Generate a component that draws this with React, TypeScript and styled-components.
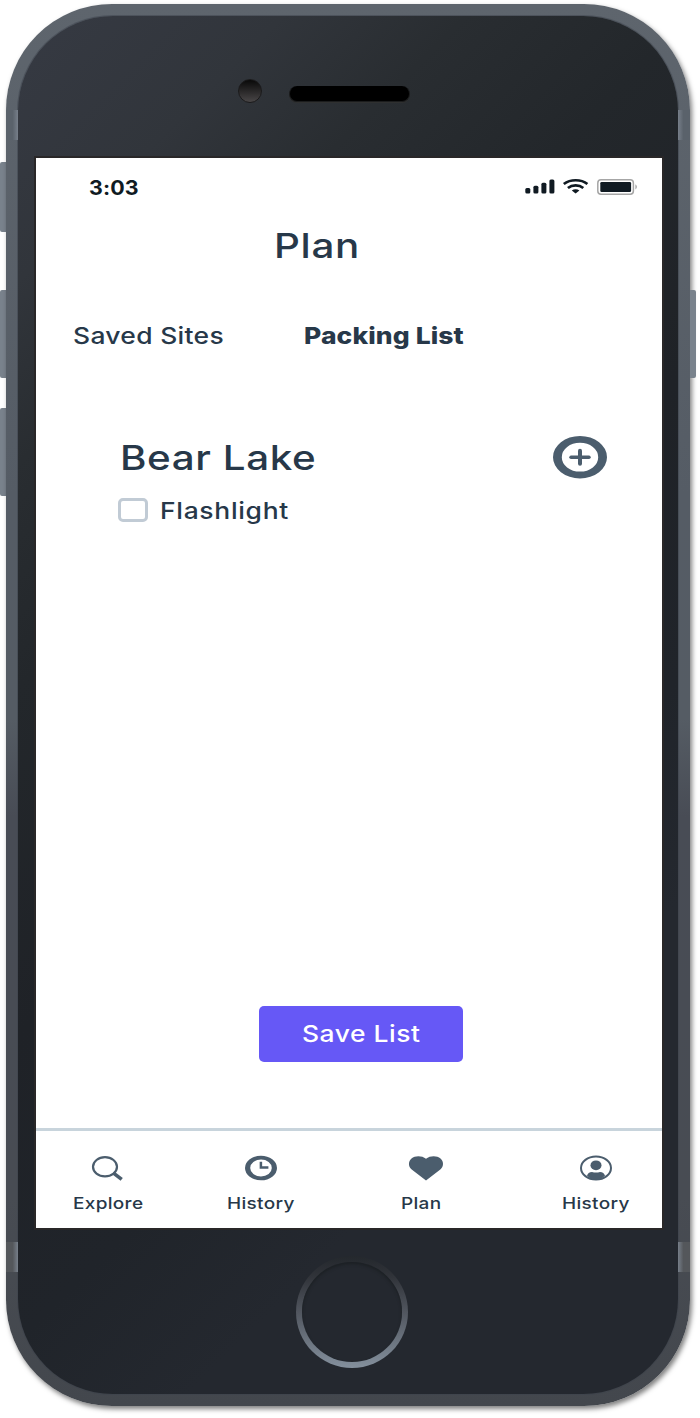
import React from "react";
import styled, { createGlobalStyle } from "styled-components";

const ink = "#273849";
const slate = "#4b5d6d";

const GlobalStyle = createGlobalStyle`
  * { box-sizing: border-box; }
  body { margin: 0; background: #fff; overflow: hidden; font-family: Inter, "Liberation Sans", sans-serif; }
  svg { display: block; overflow: visible; }
`;

const Stage = styled.main`
  display: flex;
  width: 700px;
  height: 1418px;
  padding-top: 4px;
`;

const Rail = styled.div<{ $side: "left" | "right" }>`
  display: flex;
  flex-direction: column;
  width: 6px;
  padding-top: ${(p) => (p.$side === "left" ? 158 : 286)}px;
`;

const SideButton = styled.div<{ $h: number; $gap?: number; $side: "left" | "right" }>`
  position: relative;
  height: ${(p) => p.$h}px;
  margin-bottom: ${(p) => p.$gap ?? 0}px;
  background: #79828c;
  border-radius: ${(p) => (p.$side === "left" ? "2px 0 0 2px" : "0 2px 2px 0")};
`;

const Frame = styled.div`
  position: relative;
  width: 684px;
  height: 1402px;
  padding: 12px;
  border-radius: 106px;
  background: linear-gradient(180deg, #5e656d 0%, #555c65 35%, #555c64 51%, #484c55 58%, #484c53 85%, #43474d 100%);
  box-shadow: 2px 3px 5px rgba(0, 0, 0, 0.5);
`;

const Antenna = styled.div<{ $side: "left" | "right"; $top: number; $bright?: boolean }>`
  position: absolute;
  top: ${(p) => p.$top}px;
  ${(p) => p.$side}: 0;
  width: 12px;
  height: 30px;
  background: linear-gradient(
    ${(p) => (p.$side === "left" ? "90deg" : "270deg")},
    ${(p) => (p.$bright ? "#54575b" : "#5a626b")} 55%,
    #777f8a 100%
  );
`;

const Bezel = styled.div`
  display: grid;
  grid-template-rows: 140px 1074px 164px;
  justify-content: center;
  width: 660px;
  height: 1378px;
  padding-left: 2px;
  border-radius: 95px;
  background: linear-gradient(135deg, #363a43 0%, #31353b 13%, #292d31 22%, #23272b 33%, #1f2227 50%, #20242a 65%, #24282f 76%, #24282f 100%);
  box-shadow: 0 0 0 1px rgba(60, 66, 75, 0.5);
`;

const Sensors = styled.div`
  display: flex;
  align-items: center;
  gap: 27px;
  padding: 14px 0 0 204px;
`;

const Camera = styled.div`
  width: 24px;
  height: 24px;
  margin-top: -4px;
  border: 1px solid #1b1a1b;
  border-radius: 50%;
  background: linear-gradient(#090909, #494647);
`;

const Speaker = styled.div`
  width: 121px;
  height: 16px;
  margin-top: 1px;
  border: 1px solid #1b1c1d;
  border-top: 0;
  border-radius: 8px;
  background: #000;
  box-shadow: 0 1px 0 0 #2f3030;
`;

const Screen = styled.section`
  display: flex;
  flex-direction: column;
  width: 630px;
  height: 1074px;
  border: 2px solid #292728;
  background: #fff;
`;

const Label = styled.span<{
  $size: number;
  $weight?: number;
  $stretch?: number;
  $spacing?: number;
  $color?: string;
}>`
  display: block;
  white-space: nowrap;
  font-size: ${(p) => p.$size}px;
  line-height: 40px;
  font-weight: ${(p) => p.$weight ?? 550};
  letter-spacing: ${(p) => p.$spacing ?? 0}px;
  color: ${(p) => p.$color ?? ink};
  transform: scaleX(${(p) => p.$stretch ?? 1});
  transform-origin: 0 50%;
`;

const StatusBar = styled.header`
  display: flex;
  justify-content: space-between;
  height: 58px;
  padding: 10px 24px 0 53px;
`;

const StatusIcons = styled.div`
  display: flex;
  align-items: flex-start;
  gap: 8px;
  padding-top: 11px;
`;

const Title = styled.div`
  height: 80px;
  padding: 10px 0 0 238px;
`;

const Tabs = styled.nav`
  display: grid;
  grid-template-columns: 231px 1fr;
  height: 120px;
  padding: 20px 0 0 37px;
`;

const ListHeader = styled.div`
  display: flex;
  justify-content: space-between;
  align-items: center;
  height: 84px;
  padding: 0 55px 0 84px;

  svg { margin-bottom: 1px; }
`;

const Item = styled.label`
  display: flex;
  align-items: center;
  gap: 12px;
  height: 40px;
  margin-top: -9px;
  padding-left: 82px;
`;

const Checkbox = styled.span`
  width: 30px;
  height: 24px;
  margin-top: -2px;
  border: 3px solid #c1cbd5;
  border-radius: 5px;
`;

const SaveButton = styled.button`
  display: block;
  width: 204px;
  height: 56px;
  margin: auto 0 66px 223px;
  padding: 0 0 0 43px;
  border: 0;
  border-radius: 5px;
  background: #6658f6;
  font-family: inherit;
  text-align: left;
`;

const TabBar = styled.footer`
  display: grid;
  grid-template-columns: 154px 174px 161px 1fr;
  height: 100px;
  padding: 24px 0 0 37px;
  border-top: 3px solid #c8d4dc;
`;

const NavItem = styled.div<{ $inset: number }>`
  display: flex;
  flex-direction: column;
  gap: 2px;
  svg { margin-left: ${(p) => p.$inset}px; }
`;

const HomeArea = styled.div`
  display: flex;
  justify-content: center;
  padding: 26px 0 0 6px;
`;

const HomeButton = styled.div`
  width: 112px;
  height: 112px;
  padding: 6px;
  border-radius: 50%;
  background: linear-gradient(#24282d 0%, #303339 18%, #51565f 50%, #84909d 100%);
`;

const HomeFace = styled.div`
  height: 100px;
  border-radius: 50%;
  background: #24282f;
  box-shadow: inset 0 2px 3px #1c2024;
`;

const Signal = () => (
  <svg width="30" height="15" viewBox="0 0 30 15" fill="#101a22">
    <rect x="0.3" y="8.9" width="5" height="5.6" rx="1.5" />
    <rect x="8.4" y="6.7" width="5" height="7.8" rx="1.5" />
    <rect x="16.4" y="3.7" width="5" height="10.8" rx="1.5" />
    <rect x="24.4" y="0.5" width="5" height="14" rx="1.5" />
  </svg>
);

const Wifi = () => (
  <svg width="26" height="15" viewBox="0 0 26 15" fill="none" stroke="#101a22" strokeWidth="2.7">
    <path d="M.8 5C7.4 0 18 0 24.4 5" />
    <path d="M4.9 9C9.2 5.6 16.1 5.6 20.3 9" />
    <path d="M8.8 11.6C11 9.9 14.2 9.9 16.4 11.6L12.6 14.4Z" fill="#101a22" stroke="none" />
  </svg>
);

const Battery = () => (
  <svg width="41" height="16" viewBox="0 0 41 16">
    <rect x="0.8" y="0.8" width="35.6" height="14.4" rx="3.2" fill="none" stroke="#a6a6a6" strokeWidth="1.5" />
    <rect x="3.3" y="2.9" width="30.8" height="10.2" rx="1.3" fill="#101a22" />
    <path d="M38.4 5.2Q41.5 7.8 38.4 10.4Z" fill="#a6a6a6" />
  </svg>
);

const AddIcon = () => (
  <svg width="54" height="43" viewBox="0 0 54 43" fill="none" stroke={slate} strokeWidth="4" strokeLinecap="round">
    <path
      d="M27 0A27 21.2 0 1 1 27 42.4A27 21.2 0 1 1 27 0ZM27 6.8A18.2 14.4 0 1 0 27 35.6A18.2 14.4 0 1 0 27 6.8Z"
      fill={slate}
      fillRule="evenodd"
      stroke="none"
    />
    <path d="M27 14.7V27.7" />
    <path d="M18 21.2H36" strokeWidth="3.4" />
  </svg>
);

const SearchIcon = () => (
  <svg width="32" height="26" viewBox="0 0 32 26" fill="none" stroke={slate}>
    <ellipse cx="14" cy="11.8" rx="12" ry="9.6" strokeWidth="2.2" />
    <path d="M22.2 17.8L30.7 24.4" strokeWidth="3.6" />
  </svg>
);

const ClockIcon = () => (
  <svg width="32" height="26" viewBox="0 0 32 26">
    <path
      d="M16 .7A16 12.3 0 1 1 16 25.3A16 12.3 0 1 1 16 .7ZM16 4.6A10.8 8.4 0 1 0 16 21.4A10.8 8.4 0 1 0 16 4.6Z"
      fill={slate}
      fillRule="evenodd"
    />
    <path d="M15.9 6.8V12.6H23.4" fill="none" stroke={slate} strokeWidth="2.5" />
  </svg>
);

const HeartIcon = () => (
  <svg width="34" height="26" viewBox="0 0 34 26" fill={slate}>
    <path d="M17 25.5L2.7 14.5C-.9 11.6-.9 6.4 2.5 3.5C6 .6 12.8.5 17 3.8C21.2.5 28 .6 31.5 3.5C34.9 6.4 34.9 11.6 31.3 14.5Z" />
  </svg>
);

const UserIcon = () => (
  <svg width="32" height="26" viewBox="0 0 32 26" fill={slate}>
    <ellipse cx="16" cy="13" rx="15" ry="11.5" fill="none" stroke={slate} strokeWidth="2" />
    <ellipse cx="16" cy="10.3" rx="5.5" ry="4.9" />
    <path d="M7 20.8C7.6 18.3 9.4 17 12 17Q16 18.2 20 17C22.6 17 24.4 18.3 25 20.8Q21.5 24.3 16 24.3Q10.5 24.3 7 20.8Z" />
  </svg>
);

const destinations = [
  { label: "Explore", icon: <SearchIcon />, inset: 18 },
  { label: "History", icon: <ClockIcon />, inset: 18 },
  { label: "Plan", icon: <HeartIcon />, inset: 8 },
  { label: "History", icon: <UserIcon />, inset: 18 },
];

export default function App() {
  return (
    <>
      <GlobalStyle />
      <Stage>
        <Rail $side="left">
          <SideButton $side="left" $h={70} $gap={58} />
          <SideButton $side="left" $h={88} $gap={30} />
          <SideButton $side="left" $h={88} />
        </Rail>
        <Frame>
          <Antenna $side="left" $top={106} />
          <Antenna $side="right" $top={106} />
          <Antenna $side="left" $top={1238} $bright />
          <Antenna $side="right" $top={1238} $bright />
          <Bezel>
            <Sensors>
              <Camera />
              <Speaker />
            </Sensors>
            <Screen>
              <StatusBar>
                <Label $size={20} $weight={650} $stretch={1.07} $spacing={0.1} $color="#101a22">3:03</Label>
                <StatusIcons>
                  <Signal />
                  <Wifi />
                  <Battery />
                </StatusIcons>
              </StatusBar>
              <Title>
                <Label $size={34.5} $stretch={1.17} $spacing={0.6}>Plan</Label>
              </Title>
              <Tabs>
                <Label $size={23} $stretch={1.15} $spacing={0.27}>Saved Sites</Label>
                <Label $size={23} $weight={850} $stretch={1.15} $spacing={0.1}>Packing List</Label>
              </Tabs>
              <ListHeader>
                <Label $size={34.5} $stretch={1.17} $spacing={0.5}>Bear Lake</Label>
                <AddIcon />
              </ListHeader>
              <Item>
                <Checkbox />
                <Label $size={23} $stretch={1.15} $spacing={0.6}>Flashlight</Label>
              </Item>
              <SaveButton>
                <Label $size={23} $stretch={1.15} $spacing={0.45} $color="#fff">Save List</Label>
              </SaveButton>
              <TabBar>
                {destinations.map((d, i) => (
                  <NavItem key={i} $inset={d.inset}>
                    {d.icon}
                    <Label $size={16.5} $stretch={1.15} $spacing={0.28}>{d.label}</Label>
                  </NavItem>
                ))}
              </TabBar>
            </Screen>
            <HomeArea>
              <HomeButton>
                <HomeFace />
              </HomeButton>
            </HomeArea>
          </Bezel>
        </Frame>
        <Rail $side="right">
          <SideButton $side="right" $h={88} />
        </Rail>
      </Stage>
    </>
  );
}
